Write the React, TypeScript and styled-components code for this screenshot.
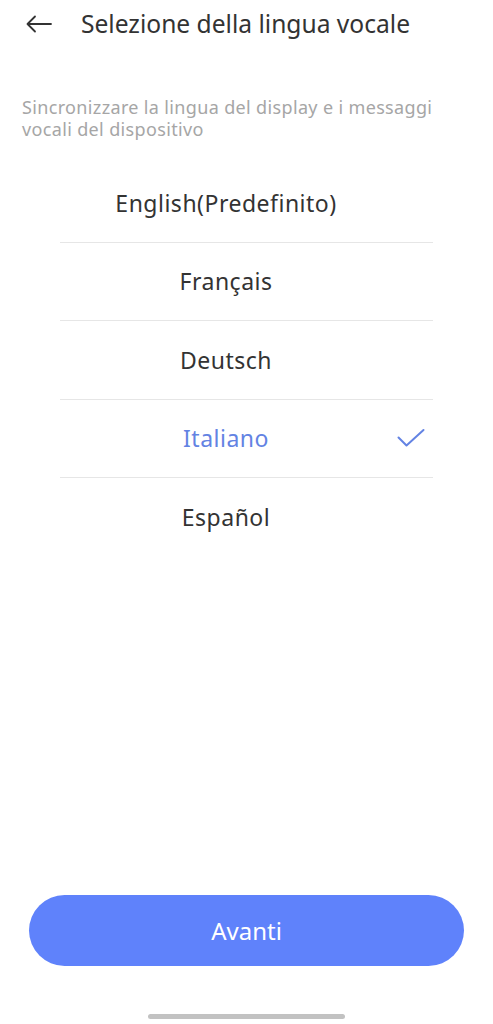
import React from "react";
import styled, { createGlobalStyle } from "styled-components";

const Global = createGlobalStyle`
  html, body { margin: 0; padding: 0; background: #ffffff; }
  body { font-family: "Noto Sans", "Open Sans", sans-serif; }
  * { box-sizing: border-box; }
`;

const Page = styled.div`
  width: 493px;
  height: 1024px;
  display: flex;
  flex-direction: column;
  background: #ffffff;
  overflow: hidden;
`;

const Header = styled.div`
  height: 47px;
  display: flex;
  align-items: center;
  padding-left: 26px;
  gap: 29px;
`;

const BackButton = styled.div`
  width: 26px;
  height: 26px;
  display: flex;
  align-items: center;
  justify-content: center;
  color: #333333;
`;

const Title = styled.h1`
  margin: 0;
  font-size: 24.6px;
  font-weight: 400;
  color: #333333;
  letter-spacing: 0;
`;

const Subtitle = styled.p`
  margin: 49px 0 0 22px;
  padding-right: 30px;
  font-size: 18px;
  letter-spacing: 0.35px;
  line-height: 22px;
  color: #a6a6a6;
`;

const List = styled.ul`
  list-style: none;
  margin: 24px 60px 0;
  padding: 0;
`;

const Row = styled.li<{ $last?: boolean }>`
  position: relative;
  height: 78.5px;
  display: flex;
  align-items: center;
  justify-content: center;
  padding-right: 41px;
  border-bottom: ${(p) => (p.$last ? "none" : "1px solid #e6e6e6")};
`;

const Label = styled.span<{ $selected?: boolean }>`
  font-size: 23px;
  letter-spacing: 0.5px;
  color: ${(p) => (p.$selected ? "#6383e3" : "#333333")};
`;

const Check = styled.span`
  position: absolute;
  right: 8px;
  top: 50%;
  transform: translateY(-50%);
  display: flex;
`;

const Spacer = styled.div`
  flex: 1;
`;

const Footer = styled.div`
  padding: 0 29px;
  display: flex;
  flex-direction: column;
  align-items: center;
`;

const PrimaryButton = styled.button`
  width: 100%;
  height: 71px;
  border: none;
  border-radius: 36px;
  background: #5f82fb;
  color: #ffffff;
  font-family: inherit;
  font-size: 24px;
  font-weight: 400;
`;

const HomeIndicator = styled.div`
  margin-top: 48px;
  margin-bottom: 5px;
  width: 197px;
  height: 5px;
  border-radius: 3px;
  background: #c2c2c2;
`;

const languages = [
  "English(Predefinito)",
  "Français",
  "Deutsch",
  "Italiano",
  "Español",
];

export default function App() {
  const selected = "Italiano";
  return (
    <Page>
      <Global />
      <Header>
        <BackButton>
          <svg width="26" height="18" viewBox="0 0 26 18" fill="none">
            <path
              d="M9 1.5L1.5 9L9 16.5M1.5 9H25"
              stroke="#333333"
              strokeWidth="1.8"
              strokeLinecap="round"
              strokeLinejoin="round"
            />
          </svg>
        </BackButton>
        <Title>Selezione della lingua vocale</Title>
      </Header>
      <Subtitle>
        Sincronizzare la lingua del display e i messaggi vocali del dispositivo
      </Subtitle>
      <List>
        {languages.map((lang, i) => (
          <Row key={lang} $last={i === languages.length - 1}>
            <Label $selected={lang === selected}>{lang}</Label>
            {lang === selected && (
              <Check>
                <svg width="28" height="20" viewBox="0 0 28 20" fill="none">
                  <path
                    d="M1.5 9.5L9.5 17.5L26.5 2"
                    stroke="#6383e3"
                    strokeWidth="2"
                    strokeLinecap="round"
                    strokeLinejoin="round"
                  />
                </svg>
              </Check>
            )}
          </Row>
        ))}
      </List>
      <Spacer />
      <Footer>
        <PrimaryButton>Avanti</PrimaryButton>
        <HomeIndicator />
      </Footer>
    </Page>
  );
}
